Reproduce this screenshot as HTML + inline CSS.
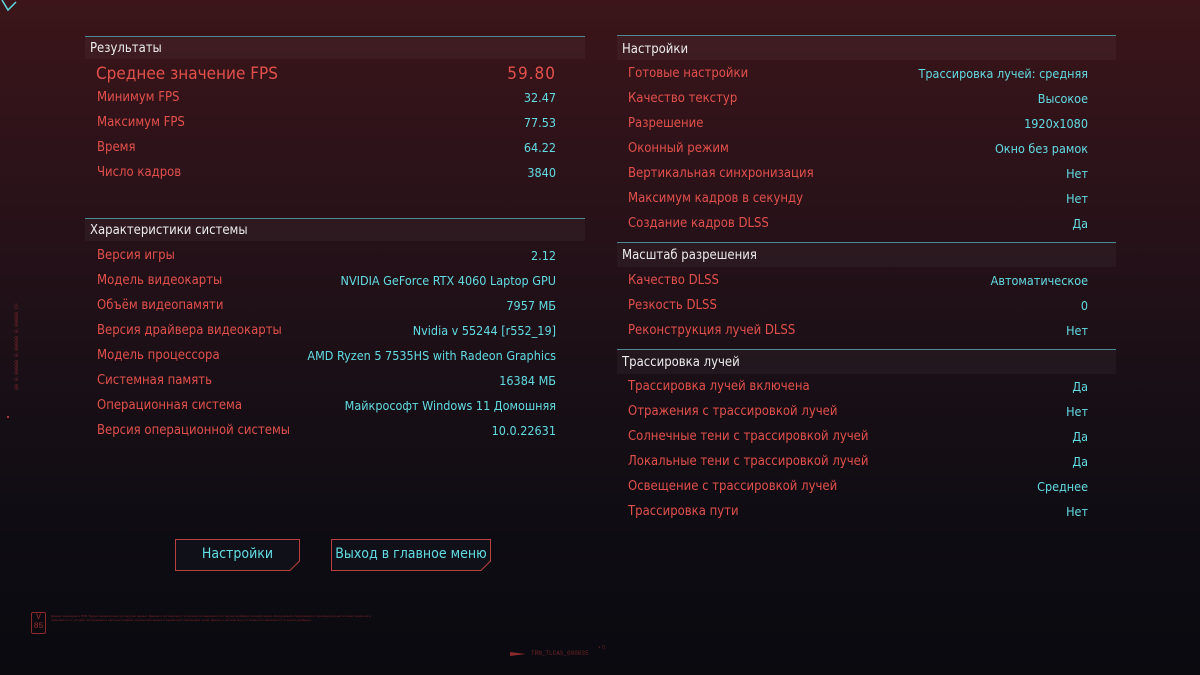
<!DOCTYPE html>
<html><head><meta charset="utf-8"><style>
*{margin:0;padding:0;box-sizing:border-box}
body{width:1200px;height:675px;overflow:hidden;position:relative;
background:linear-gradient(180deg,#3b1519 0%,#2c1219 25%,#1a0f16 55%,#0e0c13 80%,#0a0a0f 100%);
font-family:"DejaVu Sans Condensed","Liberation Sans",sans-serif;}
.t{position:absolute;white-space:nowrap;line-height:16px;font-size:13px}
.l{color:#e2504b}
.v{color:#62dbe3;text-align:right;font-size:12.5px}
.h{color:#ececec;font-size:13px}
.line{position:absolute;height:1px;background:#4a8a92}
.band{position:absolute;background:rgba(255,255,255,0.035)}
.btn{position:absolute;color:#62dbe3;font-size:14px;text-align:center;line-height:30px;white-space:nowrap}
</style></head><body>

<svg style="position:absolute;left:0;top:0" width="20" height="16"><path d="M2 0 L8 10 L16 2" fill="none" stroke="#5fd8e0" stroke-width="1.5"/></svg>

<div class="line" style="left:85px;top:36px;width:500px"></div>
<div class="band" style="left:85px;top:37px;width:500px;height:22px"></div>
<div class="t h" style="left:90px;top:41px">Результаты</div>
<div class="t l" style="left:96px;top:64px;font-size:17px;line-height:20px">Среднее значение FPS</div>
<div class="t l" style="right:644px;top:64px;font-size:17px;line-height:20px;letter-spacing:1px">59.80</div>

<div class="t l" style="left:97px;top:90px">Минимум FPS</div><div class="t v" style="right:644px;top:90px">32.47</div>
<div class="t l" style="left:97px;top:115px">Максимум FPS</div><div class="t v" style="right:644px;top:115px">77.53</div>
<div class="t l" style="left:97px;top:140px">Время</div><div class="t v" style="right:644px;top:140px">64.22</div>
<div class="t l" style="left:97px;top:165px">Число кадров</div><div class="t v" style="right:644px;top:165px">3840</div>

<div class="line" style="left:85px;top:218px;width:500px"></div>
<div class="band" style="left:85px;top:219px;width:500px;height:22px"></div>
<div class="t h" style="left:90px;top:223px">Характеристики системы</div>
<div class="t l" style="left:97px;top:248px">Версия игры</div><div class="t v" style="right:644px;top:248px">2.12</div>
<div class="t l" style="left:97px;top:273px">Модель видеокарты</div><div class="t v" style="right:644px;top:273px">NVIDIA GeForce RTX 4060 Laptop GPU</div>
<div class="t l" style="left:97px;top:298px">Объём видеопамяти</div><div class="t v" style="right:644px;top:298px">7957 МБ</div>
<div class="t l" style="left:97px;top:323px">Версия драйвера видеокарты</div><div class="t v" style="right:644px;top:323px">Nvidia v 55244 [r552_19]</div>
<div class="t l" style="left:97px;top:348px">Модель процессора</div><div class="t v" style="right:644px;top:348px">AMD Ryzen 5 7535HS with Radeon Graphics</div>
<div class="t l" style="left:97px;top:373px">Системная память</div><div class="t v" style="right:644px;top:373px">16384 МБ</div>
<div class="t l" style="left:97px;top:398px">Операционная система</div><div class="t v" style="right:644px;top:398px">Майкрософт Windows 11 Домошняя</div>
<div class="t l" style="left:97px;top:423px">Версия операционной системы</div><div class="t v" style="right:644px;top:423px">10.0.22631</div>

<svg style="position:absolute;left:175px;top:539px" width="125" height="32"><path d="M0.5 0.5 H124.5 V22 L115 31.5 H0.5 Z" fill="#101019" stroke="#b8403f"/></svg>
<div class="btn" style="left:175px;top:539px;width:125px;height:32px">Настройки</div>
<svg style="position:absolute;left:331px;top:539px" width="160" height="32"><path d="M0.5 0.5 H159.5 V22 L150 31.5 H0.5 Z" fill="#101019" stroke="#b8403f"/></svg>
<div class="btn" style="left:331px;top:539px;width:160px;height:32px">Выход в главное меню</div>

<div class="line" style="left:617px;top:35px;width:499px"></div>
<div class="band" style="left:617px;top:36px;width:499px;height:24px"></div>
<div class="t h" style="left:622px;top:42px">Настройки</div>
<div class="t l" style="left:628px;top:66px">Готовые настройки</div><div class="t v" style="right:112px;top:66px">Трассировка лучей: средняя</div>
<div class="t l" style="left:628px;top:91px">Качество текстур</div><div class="t v" style="right:112px;top:91px">Высокое</div>
<div class="t l" style="left:628px;top:116px">Разрешение</div><div class="t v" style="right:112px;top:116px">1920x1080</div>
<div class="t l" style="left:628px;top:141px">Оконный режим</div><div class="t v" style="right:112px;top:141px">Окно без рамок</div>
<div class="t l" style="left:628px;top:166px">Вертикальная синхронизация</div><div class="t v" style="right:112px;top:166px">Нет</div>
<div class="t l" style="left:628px;top:191px">Максимум кадров в секунду</div><div class="t v" style="right:112px;top:191px">Нет</div>
<div class="t l" style="left:628px;top:216px">Создание кадров DLSS</div><div class="t v" style="right:112px;top:216px">Да</div>

<div class="line" style="left:617px;top:242px;width:499px"></div>
<div class="band" style="left:617px;top:243px;width:499px;height:24px"></div>
<div class="t h" style="left:622px;top:248px">Масштаб разрешения</div>
<div class="t l" style="left:628px;top:273px">Качество DLSS</div><div class="t v" style="right:112px;top:273px">Автоматическое</div>
<div class="t l" style="left:628px;top:298px">Резкость DLSS</div><div class="t v" style="right:112px;top:298px">0</div>
<div class="t l" style="left:628px;top:323px">Реконструкция лучей DLSS</div><div class="t v" style="right:112px;top:323px">Нет</div>

<div class="line" style="left:617px;top:349px;width:499px"></div>
<div class="band" style="left:617px;top:350px;width:499px;height:24px"></div>
<div class="t h" style="left:622px;top:355px">Трассировка лучей</div>
<div class="t l" style="left:628px;top:379px">Трассировка лучей включена</div><div class="t v" style="right:112px;top:379px">Да</div>
<div class="t l" style="left:628px;top:404px">Отражения с трассировкой лучей</div><div class="t v" style="right:112px;top:404px">Нет</div>
<div class="t l" style="left:628px;top:429px">Солнечные тени с трассировкой лучей</div><div class="t v" style="right:112px;top:429px">Да</div>
<div class="t l" style="left:628px;top:454px">Локальные тени с трассировкой лучей</div><div class="t v" style="right:112px;top:454px">Да</div>
<div class="t l" style="left:628px;top:479px">Освещение с трассировкой лучей</div><div class="t v" style="right:112px;top:479px">Среднее</div>
<div class="t l" style="left:628px;top:504px">Трассировка пути</div><div class="t v" style="right:112px;top:504px">Нет</div>

<div style="position:absolute;left:14px;top:290px;width:10px;height:100px;color:#7a2a2c;font-size:5px;writing-mode:vertical-rl;transform:rotate(180deg);font-family:'Liberation Mono',monospace">00 0.00000 0.00000 0.00000 CF</div>
<div style="position:absolute;left:7px;top:416px;width:2px;height:2px;background:#a03a3a"></div>
<div style="position:absolute;left:31px;top:612px;width:15px;height:22px;border:1px solid #8a2a2c;border-radius:2px;color:#9a2e2e;font-size:8px;line-height:9px;text-align:center;font-family:'Liberation Mono',monospace">V<br>85</div>
<div style="position:absolute;left:51px;top:615px;width:325px;height:15px;color:#7a2426;font-size:3px;line-height:3.5px;overflow:hidden;font-family:'Liberation Sans',sans-serif">Данные защищены в ПЛВ. Будьте внимательны при загрузке данных. Данные о системе могут отличаться в зависимости от версии драйвера и конфигурации оборудования. Информация о производительности может меняться в зависимости от условий тестирования и настроек графики, разрешения экрана и параметров трассировки лучей. Данные о системе могут отличаться в зависимости от версии драйвера.</div>
<svg style="position:absolute;left:510px;top:651px" width="20" height="6"><path d="M0 1 L16 3 L0 5 Z" fill="#8a2a2c"/></svg>
<div style="position:absolute;left:531px;top:650px;color:#6a2426;font-size:6px;font-family:'Liberation Mono',monospace">TRN_TLCAS_000035</div>
<div style="position:absolute;left:598px;top:645px;color:#6a2426;font-size:5px">• 0</div>
</body></html>
